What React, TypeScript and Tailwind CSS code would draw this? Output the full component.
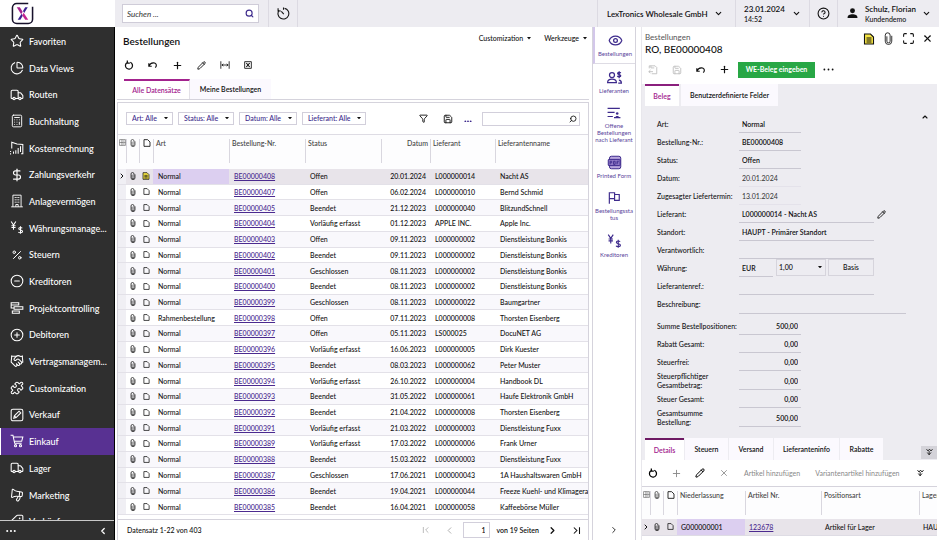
import type { ReactNode } from "react";
import {
  Calculator,
  ChartPie,
  ChevronDown,
  ChevronLeft,
  ChevronRight,
  ChevronUp,
  CircleHelp,
  CircleMinus,
  CirclePlus,
  DollarSign,
  Eye,
  Funnel,
  Handshake,
  Maximize,
  Megaphone,
  Pencil,
  Percent,
  Plus,
  Puzzle,
  Save,
  Search,
  ShoppingCart,
  Star,
  Tag,
  Truck,
  X,
} from "lucide-react";

interface IOrder {
  type: string,
  nr: string,
  status: string,
  date: string,
  supplier: string,
  name: string,
}

const o = (nr: string, status: string, date: string, supplier: string, name: string, type = "Normal"): IOrder =>
  ({ type, nr: `BE00000${nr}`, status, date, supplier, name });

const orders: IOrder[] = [
  o("408", "Offen", "20.01.2024", "L000000014", "Nacht AS"),
  o("407", "Offen", "06.02.2024", "L000000010", "Bernd Schmid"),
  o("405", "Beendet", "21.12.2023", "L000000040", "BlitzundSchnell"),
  o("404", "Vorläufig erfasst", "01.12.2023", "APPLE INC.", "Apple Inc."),
  o("403", "Offen", "09.11.2023", "L000000002", "Dienstleistung Bonkis"),
  o("402", "Beendet", "09.11.2023", "L000000002", "Dienstleistung Bonkis"),
  o("401", "Geschlossen", "08.11.2023", "L000000002", "Dienstleistung Bonkis"),
  o("400", "Beendet", "08.11.2023", "L000000002", "Dienstleistung Bonkis"),
  o("399", "Geschlossen", "08.11.2023", "L000000022", "Baumgartner"),
  o("398", "Offen", "07.11.2023", "L000000008", "Thorsten Eisenberg", "Rahmenbestellung"),
  o("397", "Offen", "05.11.2023", "LS000025", "DocuNET AG"),
  o("396", "Vorläufig erfasst", "16.06.2023", "L000000005", "Dirk Kuester"),
  o("395", "Beendet", "08.03.2023", "L000000062", "Peter Muster"),
  o("394", "Vorläufig erfasst", "26.10.2022", "L000000004", "Handbook DL"),
  o("393", "Beendet", "31.05.2022", "L000000061", "Haufe Elektronik GmbH"),
  o("392", "Beendet", "21.04.2022", "L000000008", "Thorsten Eisenberg"),
  o("391", "Vorläufig erfasst", "21.03.2022", "L000000003", "Dienstleistung Fuxx"),
  o("389", "Vorläufig erfasst", "17.03.2022", "L000000006", "Frank Urner"),
  o("388", "Beendet", "15.03.2022", "L000000003", "Dienstleistung Fuxx"),
  o("387", "Geschlossen", "17.06.2021", "L000000043", "1A Haushaltswaren GmbH"),
  o("386", "Beendet", "19.04.2021", "L000000044", "Freeze Kuehl- und Klimagera"),
  o("385", "Beendet", "16.04.2021", "L000000058", "Kaffeebörse Müller"),
];

function Svg({ children, className = "size-3", width = 2 }: { children: ReactNode, className?: string, width?: number }) {
  return <svg viewBox="0 0 24 24" fill="none" stroke="currentColor" strokeWidth={width} className={`shrink-0 ${className}`} aria-hidden="true">{children}</svg>;
}

const DocIcon = ({ className = "size-[8px]" }) => (
  <Svg className={className} width={2.6}><path d="M3 2h11l7 7v13H3z" /></Svg>
);

const NoteIcon = ({ className = "size-[9px]" }) => (
  <Svg className={className} width={2.2}><path d="M3 2h12l6 6v14H3z" fill="#f6e544" /><path d="M7 10h10M7 14h10M7 18h10" width={1.6} /></Svg>
);

const GridIcon = () => (
  <Svg className="size-[7px] text-[#555]"><path d="M2 2h20v20H2zM2 12h20M10 2v20M13 7h6M13 17h6" /></Svg>
);

const ClipIcon = ({ className = "size-[8px]", width = 2.2 }) => (
  <Svg className={className} width={width}><path d="M18 7v10a6 6 0 0 1-12 0V6a4.500 4.500 0 0 1 9 0v11a3 3 0 0 1-6 0V8" /></Svg>
);

const RefreshIcon = () => (
  <Svg className="size-[10px]" width={3}><path d="M15 5.500A8.500 8.500 0 1 1 7 6.500M8 1l0 6.500 6 0" /></Svg>
);

const UndoIcon = () => (
  <Svg className="size-[10px]" width={2.8}><path d="M2 8v7h7M2.500 14.500C6 5 20 4 20 13c0 2-1 4-3 5" /></Svg>
);

const YenDollar = ({ className = "size-4" }) => (
  <Svg className={className} width={1.8}>
    <path d="M2 1l4 6 4-6M6 7v8M2.500 8h7M2.500 11h7" />
    <path d="M21 12.500c-1-1.500-6-2-6 .8 0 3 6.500 1.500 6.500 4.700 0 3-6 2.800-7 .8M18 9v13" />
  </Svg>
);

const Caret = ({ className = "w-[5px]" }) => (
  <svg viewBox="0 0 10 6" className={`shrink-0 ${className}`} aria-hidden="true"><path d="M0 0h10L5 6z" fill="#111" /></svg>
);

const DoubleDown = () => (
  <Svg className="size-[9px]" width={2.2}><path d="M4 3l4 5 4-5M12 3l4 5 4-5M6 12l5 6 5-6M11 8v10" /></Svg>
);

const navIcon = "size-[14px] shrink-0";

const navItems: { label: string, icon: ReactNode }[] = [
  { label: "Favoriten", icon: <Star className={navIcon} strokeWidth={1.8} /> },
  { label: "Data Views", icon: <ChartPie className={navIcon} strokeWidth={1.8} /> },
  { label: "Routen", icon: <Truck className={navIcon} strokeWidth={1.8} /> },
  { label: "Buchhaltung", icon: <Calculator className={navIcon} strokeWidth={1.6} /> },
  {
    label: "Kostenrechnung",
    icon: <Svg className={navIcon} width={1.8}><path d="M3 13V2l9 3 10 1v16h-3M1 17v2M1 21v2M6 18v4M10 16v6M14 12v10M18 9v10" /></Svg>
  },
  { label: "Zahlungsverkehr", icon: <DollarSign className={navIcon} strokeWidth={2} /> },
  {
    label: "Anlagevermögen",
    icon: <Svg className={navIcon} width={1.6}><path d="M5 22V2h14v20M2 22h20M8 6h2M11 6h2M14 6h2M8 10h2M11 10h2M14 10h2M8 14h2M11 14h2M14 14h2M10 22v-4h4v4" /></Svg>
  },
  { label: "Währungsmanage...", icon: <YenDollar className={navIcon} /> },
  { label: "Steuern", icon: <Percent className="mx-px size-3 shrink-0" strokeWidth={2} /> },
  { label: "Kreditoren", icon: <CircleMinus className={navIcon} strokeWidth={1.8} /> },
  {
    label: "Projektcontrolling",
    icon: <Svg className={navIcon} width={1.8}><path d="M2 3h13v4H2zM7 10h15v4H7zM4 17h12v4H4zM2 5v7h5" /></Svg>
  },
  { label: "Debitoren", icon: <CirclePlus className={navIcon} strokeWidth={1.8} /> },
  { label: "Vertragsmanagem...", icon: <Handshake className={navIcon} strokeWidth={1.8} /> },
  { label: "Customization", icon: <Puzzle className={navIcon} strokeWidth={1.8} /> },
  {
    label: "Verkauf",
    icon: <Svg className={navIcon} width={1.8}><rect x="2" y="2" width="20" height="20" rx="3" /><path d="M6.500 17.500l1-4 8-8 3 3-8 8zM7.500 13.500l3 3" /></Svg>
  },
  {
    label: "Einkauf",
    icon: <Svg className={navIcon} width={1.8}><path d="M1 2h4l3 14h12M5.500 5H22l-2 7.500H7.500" /><circle cx="9.500" cy="20" r="1.800" /><circle cx="18" cy="20" r="1.800" /></Svg>
  },
  { label: "Lager", icon: <Truck className={navIcon} strokeWidth={1.8} /> },
  { label: "Marketing", icon: <Megaphone className={`${navIcon} -scale-x-100 rotate-6`} strokeWidth={1.8} /> },
  { label: "Verkäufer", icon: <Tag className={`${navIcon} -scale-x-100`} strokeWidth={1.8} /> },
];

function Sidebar() {
  return <aside className="flex w-[115px] shrink-0 flex-col border-r border-black bg-[#2f2f2f] text-white">
    <nav className="min-h-0 flex-1 overflow-hidden pt-px">
      <ul className="flex h-[103%] flex-col">
        {navItems.map((item) => {
          const active = item.label === "Einkauf";
          return (<li key={item.label} className="min-h-0 flex-1">
            <a href="#" className={`flex h-full items-center gap-[5px] border-l pl-[9px] text-[9px] font-medium whitespace-nowrap ${active ? "border-white bg-[#583192]" : "border-transparent"}`}>
              {item.icon}
              <span className="pt-px">{item.label}</span>
            </a>
          </li>)
        })}
      </ul>
    </nav>
    <div className="flex h-5 shrink-0 items-center justify-between border-t border-[#c8c8c8] px-1.5">
      <button aria-label="Mehr"><Svg className="size-[10px]" width={0}><g fill="currentColor"><circle cx="3" cy="12" r="2.500" /><circle cx="12" cy="12" r="2.500" /><circle cx="21" cy="12" r="2.500" /></g></Svg></button>
      <button aria-label="Menü einklappen"><ChevronLeft className="size-[10px]" strokeWidth={3} /></button>
    </div>
  </aside>;
}

function Header() {
  return <header className="flex h-[27px] shrink-0 bg-[#edecf1]">
    <div className="flex w-[115px] shrink-0 items-center bg-white pl-[11px]">
      <svg viewBox="0 0 24 24" className="size-[23px]" fill="none" role="img" aria-label="Logo">
        <path d="M18 1.500H6A4.500 4.500 0 0 0 1.500 6v12A4.500 4.500 0 0 0 6 22.500h12a4.500 4.500 0 0 0 4.500-4.500V5" stroke="#17112b" strokeWidth="1.600" />
        <path d="M6 5.500h3.200l3 4.800-1.600 2.500z" fill="#a8228f" />
        <path d="M17.500 5.500h-2.700l-2.300 3.800 1.300 2.200z" fill="#3a2191" />
        <path d="M11 12.200L7 18.500h2.800l2.500-4.200z" fill="#3a2191" />
        <path d="M13.200 11.200l-1.500 2.500 3.200 4.800H18z" fill="#c3248e" />
      </svg>
    </div>
    <div className="flex items-center border-r border-[#dcdae2] pr-[9px] pl-[7px]">
      <label className="flex h-[19px] w-[137px] items-center border border-[#cfccd8] bg-white px-1">
        <input type="search" aria-label="Suchen" placeholder="Suchen ..." className="min-w-0 flex-1 text-[8px] italic outline-none placeholder:text-[#333]" />
        <Search className="size-[9px] text-[#3d2a8c]" strokeWidth={3} />
      </label>
    </div>
    <button aria-label="Verlauf" className="flex w-[29px] items-center justify-center border-r border-[#dcdae2]">
      <Svg className="size-[13px]"><path d="M14 2.500A10 10 0 1 1 4 6M2 2.500v5h5M8 8l4.500 5M12 1v4" /></Svg>
    </button>
    <div className="flex-1" />
    <button className="flex w-[138px] items-center gap-[6px] border-l border-[#dcdae2] pl-[9px] text-[8px] font-semibold whitespace-nowrap">
      LexTronics Wholesale GmbH
      <ChevronDown className="size-[9px]" strokeWidth={3} />
    </button>
    <button className="flex w-[74px] items-center gap-[7px] border-l border-[#dcdae2] pl-2 text-left whitespace-nowrap">
      <span className="flex flex-col font-semibold">
        <span className="text-[8px] leading-[10px]">23.01.2024</span>
        <span className="text-[7px] leading-[10px] font-medium">14:52</span>
      </span>
      <ChevronDown className="size-[9px]" strokeWidth={3} />
    </button>
    <button aria-label="Hilfe" className="flex w-[29px] items-center justify-center border-x border-[#dcdae2]">
      <CircleHelp className="size-[13px]" />
    </button>
    <button className="flex w-[101px] items-center pr-2 pl-[9px] text-left whitespace-nowrap">
      <svg viewBox="0 0 20 20" className="mr-[7px] size-[11px] shrink-0"><circle cx="10" cy="5" r="4.500" fill="#111" /><path d="M1 18c0-5 4-6.500 9-6.500s9 1.500 9 6.500z" fill="#111" /></svg>
      <span className="flex flex-1 flex-col font-semibold">
        <span className="text-[8px] leading-[10px]">Schulz, Florian</span>
        <span className="text-[7px] leading-[10px] font-medium">Kundendemo</span>
      </span>
      <ChevronDown className="size-[9px]" strokeWidth={3} />
    </button>
  </header>;
}

function Chip({ text, width }: { text: string, width: string }) {
  return <div className={`relative h-[13px] ${width}`}>
    <select aria-label={text} className="block h-full w-full appearance-none border border-[#d2cfdb] bg-white pl-[5px] text-[7px] font-medium text-[#3d2a8c]">
      <option>{text}</option>
    </select>
    <Caret className="pointer-events-none absolute top-[5px] right-[5px] w-1" />
  </div>;
}

function HeadCell({ children, right = false }: { children?: ReactNode, right?: boolean }) {
  return <th className="p-0 align-top font-medium">
    <div className={`mt-[4px] h-[24px] overflow-hidden border-l border-[#d9d7df] leading-[8px] whitespace-nowrap text-[#444] ${right ? "pr-0.5 text-right" : "pl-0.5 text-left"}`}>{children}</div>
  </th>;
}

function IconHead({ children, border = true }: { children: ReactNode, border?: boolean }) {
  return <th className="p-0 align-top">
    <div className={`mt-[4px] flex h-[24px] items-start justify-center ${border ? "border-l border-[#d9d7df]" : ""}`}>{children}</div>
  </th>;
}

function OrderTable() {
  return <table className="h-full w-full table-fixed border-collapse text-[7px] font-medium">
    <colgroup>
      <col className="w-[8px]" />
      <col className="w-[13px]" />
      <col className="w-[14px]" />
      <col className="w-[76px]" />
      <col className="w-[76px]" />
      <col className="w-[76px]" />
      <col className="w-[49px]" />
      <col className="w-[65px]" />
      <col />
    </colgroup>
    <thead>
      <tr className="h-[34px] bg-[#fdfdfe]">
        <IconHead border={false}><GridIcon /></IconHead>
        <IconHead><ClipIcon width={1.8} /></IconHead>
        <IconHead><DocIcon /></IconHead>
        <HeadCell>Art</HeadCell>
        <HeadCell>Bestellung-Nr.</HeadCell>
        <HeadCell>Status</HeadCell>
        <HeadCell right>Datum</HeadCell>
        <HeadCell>Lieferant</HeadCell>
        <HeadCell>Lieferantenname</HeadCell>
      </tr>
    </thead>
    <tbody>
      {orders.map((order, i) => {
        const selected = i === 0;
        return (<tr key={order.nr} className={`border-b border-[#e3e1e8] leading-3 whitespace-nowrap ${selected ? "bg-[#e8e4ea]" : i % 2 ? "bg-white" : "bg-[#f9f8fc]"}`}>
          <td className="bg-[#f0eff4] p-0">{selected && <ChevronRight className="size-[8px]" strokeWidth={3} />}</td>
          <td className="p-0"><ClipIcon className="mx-auto size-[8px]" /></td>
          <td className="p-0">{selected ? <NoteIcon className="mx-auto size-[8px]" /> : <DocIcon className="mx-auto size-[7px]" />}</td>
          <td className={`p-0 pl-[5px] ${selected ? "bg-[#dccff0]" : ""}`}>{order.type}</td>
          <td className="p-0 pl-[5px]"><a href="#" className="text-[#4b2a8f] underline">{order.nr}</a></td>
          <td className="p-0 pl-[5px]">{order.status}</td>
          <td className="p-0 pr-1 text-right">{order.date}</td>
          <td className="p-0 pl-[5px]">{order.supplier}</td>
          <td className="overflow-hidden p-0 pl-[5px]">{order.name}</td>
        </tr>)
      })}
    </tbody>
  </table>;
}

function OrderList() {
  return <section className="flex min-w-0 flex-1 flex-col pr-[3px] pl-[2px]">
    <div className="flex h-[27px] shrink-0 items-center pl-[6px]">
      <h1 className="flex-1 pt-0.5 text-[10px] font-semibold">Bestellungen</h1>
      <div className="flex gap-[13px] pr-[2px] pb-1 text-[7px] font-medium">
        <button className="flex items-center gap-1">Customization<Caret className="w-1" /></button>
        <button className="flex items-center gap-1">Werkzeuge<Caret className="w-1" /></button>
      </div>
    </div>
    <div className="flex h-[25px] shrink-0 items-center gap-[14px] pb-[3px] pl-[7px]">
      <button aria-label="Aktualisieren"><RefreshIcon /></button>
      <button aria-label="Rückgängig"><UndoIcon /></button>
      <button aria-label="Neu"><Plus className="size-[11px]" strokeWidth={2.6} /></button>
      <button aria-label="Bearbeiten"><Pencil className="size-[9px]" strokeWidth={2.4} /></button>
      <button aria-label="Spaltenbreite"><Svg className="size-[10px]"><path d="M2 3v18M22 3v18M4 12h16M8 9l-3 3 3 3M16 9l3 3-3 3" /></Svg></button>
      <button aria-label="Excel-Export"><Svg className="size-[8px]" width={2.6}><path d="M2 2h20v20H2z" /><path d="M7 6l10 12M17 6L7 18" strokeWidth="3.400" /></Svg></button>
    </div>
    <div className="flex h-[21px] shrink-0 border-b border-[#d5d3dc] pl-[7px] text-[7px] font-semibold">
      <button className="w-[66px] border-t-2 border-r border-t-[#a3238e] border-r-[#e3e1e8] text-[#a3238e]">Alle Datensätze</button>
      <button className="w-[81px] bg-[#fbf9fe]">Meine Bestellungen</button>
    </div>
    <div className="mt-[2px] flex min-h-0 flex-1 flex-col border-x border-t border-[#d5d3dc]">
      <div className="flex h-8 shrink-0 items-center border-b border-[#dedce4] pr-2 pl-2">
        <div className="flex flex-1 gap-[5px]">
          <Chip text="Art: Alle" width="w-[47px]" />
          <Chip text="Status: Alle" width="w-[56px]" />
          <Chip text="Datum: Alle" width="w-[58px]" />
          <Chip text="Lieferant: Alle" width="w-[64px]" />
        </div>
        <div className="flex items-center">
          <button aria-label="Filter"><Funnel className="size-[9px]" strokeWidth={2.4} /></button>
          <button aria-label="Filter speichern" className="ml-[15px]"><Save className="size-[10px]" strokeWidth={2.2} /></button>
          <button aria-label="Mehr" className="mt-[5px] mr-[10px] ml-[11px] text-[#3d2a8c]">
            <svg viewBox="0 0 9 3" className="w-2" fill="currentColor"><circle cx="1.500" cy="1.500" r="1" /><circle cx="4.500" cy="1.500" r="1" /><circle cx="7.500" cy="1.500" r="1" /></svg>
          </button>
          <label className="flex h-[14px] w-[98px] items-center border border-[#d2cfdb] px-0.5">
            <input type="search" aria-label="Liste durchsuchen" className="min-w-0 flex-1 text-[7px] outline-none" />
            <Search className="size-[8px] -scale-x-100" strokeWidth={2.6} />
          </label>
        </div>
      </div>
      <div className="min-h-0 flex-1 overflow-hidden"><OrderTable /></div>
      <div className="mt-[4px] flex h-[21px] shrink-0 items-center border-t border-[#d5d3dc] pr-[7px] pl-[9px] text-[7px] font-semibold">
        <span className="flex-1 font-medium">Datensatz 1-22 von 403</span>
        <button aria-label="Erste Seite" className="text-[#aaa]"><Svg className="size-[8px]" width={2.4}><path d="M4 3v18M19 4l-8 8 8 8" /></Svg></button>
        <button aria-label="Vorherige Seite" className="ml-[14px] text-[#aaa]"><ChevronLeft className="size-[11px]" /></button>
        <input aria-label="Seite" defaultValue="1" className="mr-[6px] ml-2 h-4 w-[27px] border border-[#d2cfdb] pr-1 text-right" />
        <span>von 19 Seiten</span>
        <button aria-label="Nächste Seite" className="ml-2"><ChevronRight className="size-[11px]" strokeWidth={2.8} /></button>
        <button aria-label="Letzte Seite" className="ml-[14px]"><Svg className="size-[9px]" width={2.8}><path d="M20 3v18M5 4l8 8-8 8" /></Svg></button>
      </div>
    </div>
  </section>;
}

const railItems: { label: string, height: string, icon: ReactNode }[] = [
  { label: "Bestellungen", height: "h-[37px]", icon: <Eye className="size-[15px]" /> },
  {
    label: "Lieferanten",
    height: "h-[36px]",
    icon: <Svg className="size-[15px]"><circle cx="8" cy="8" r="4" /><path d="M1 20c0-7 14-7 14 0zM22 5c-1-2-5-1.500-5 .5 0 2.500 5 1 5 3.500 0 2-4 2-5.500.5M19.500 2v11M18 21h5c0-3-1-5-4-5" /></Svg>
  },
  {
    label: "Offene Bestellungen nach Lieferant",
    height: "h-[49px]",
    icon: <Svg className="size-[14px]"><path d="M1 4h21M1 11h12M1 18h9M12 20h11" /><path d="M14 20c0-4 7-4 7 0z" fill="currentColor" stroke="none" /><circle cx="17.500" cy="13" r="2.200" fill="currentColor" stroke="none" /></Svg>
  },
  {
    label: "Printed Form",
    height: "h-[36px]",
    icon: <Svg className="size-[15px]" width={1.6}><rect x="4" y="2" width="18" height="20" rx="3" fill="#b9a6dd" /><rect x="2" y="7" width="19" height="10" rx="1" fill="#8f78c6" /><path d="M5 15v-5h2.500v2.500H5M10.500 10v5h2.500v-5zM16 15v-5h3M16 12.500h2" strokeWidth="1.400" /></Svg>
  },
  {
    label: "Bestellungssta tus",
    height: "h-[43px]",
    icon: <Svg className="size-[14px]"><path d="M4 22V3h9v10H4M13 6h8v10h-8v-3" /></Svg>
  },
  { label: "Kreditoren", height: "h-[36px]", icon: <YenDollar className="size-[15px]" /> },
];

function Rail() {
  return <nav className="flex w-[44px] shrink-0 flex-col border-x border-[#d5d3dc] text-[#3d2a8c]">
    {railItems.map((item, i) => (
      <a key={item.label} href="#" className={`flex shrink-0 flex-col items-center gap-[2px] pt-[6px] text-center text-[6px] leading-[7px] ${item.height} ${i === 0 ? "border-b border-l-2 border-b-[#dedce4] border-l-[#d3c7ea]" : ""}`}>
        {item.icon}
        <span className="w-[40px] text-[#5b459c]">{item.label}</span>
      </a>
    ))}
    <button aria-label="Ausklappen" className="mt-auto mb-[5px] self-center text-[#333]"><ChevronRight className="size-[10px]" strokeWidth={2.4} /></button>
  </nav>;
}

interface IField {
  id: string,
  label: string,
  value?: string,
  width?: string,
  height?: string,
  muted?: boolean,
  right?: boolean,
  extra?: ReactNode,
}

function Field({ id, label, value = "", width = "w-[62px]", height = "h-[18px]", muted, right, extra }: IField) {
  return <div className={`flex ${height}`}>
    <label htmlFor={id} className="flex w-[82px] shrink-0 items-center leading-[9px]"><span className={height === "h-[19px]" && right ? "w-[60px]" : "whitespace-nowrap"}>{label}</span></label>
    <input id={id} defaultValue={value} readOnly={muted} className={`border-b bg-transparent px-[3px] pt-0.5 ${width} ${right ? "text-right" : ""} ${muted ? "border-[#e4e2ea] font-normal text-[#333]" : "border-[#c9c7d1] font-semibold"}`} />
    {extra}
  </div>;
}

function CurrencyExtra() {
  return <>
    <div className="relative ml-[3px] w-[50px] pb-px">
      <select aria-label="Wechselkurs" className="h-full w-full appearance-none border border-[#d6d4dc] pl-0.5">
        <option>1,00</option>
      </select>
      <Caret className="pointer-events-none absolute top-[7px] right-1 w-1" />
    </div>
    <button className="mb-px ml-[2px] w-[46px] border border-[#d6d4dc]">Basis</button>
  </>;
}

function OrderForm() {
  return <form className="relative pt-[9px] pl-[15px] text-[7px] font-medium">
    <button type="button" aria-label="Einklappen" className="absolute top-[7px] right-[8px]"><ChevronUp className="size-2" strokeWidth={3.4} /></button>
    <Field id="art" label="Art:" value="Normal" />
    <Field id="nr" label="Bestellung-Nr.:" value="BE00000408" />
    <Field id="status" label="Status:" value="Offen" />
    <Field id="datum" label="Datum:" value="20.01.2024" muted />
    <Field id="termin" label="Zugesagter Liefertermin:" value="13.01.2024" muted />
    <Field id="lieferant" label="Lieferant:" value="L000000014 - Nacht AS" width="w-[135px]"
      extra={<button type="button" aria-label="Lieferant bearbeiten" className="ml-[3px]"><Pencil className="size-[9px]" strokeWidth={2.4} /></button>} />
    <Field id="standort" label="Standort:" value="HAUPT - Primärer Standort" width="w-[135px]" />
    <Field id="verantwortlich" label="Verantwortlich:" width="w-[135px]" />
    <Field id="waehrung" label="Währung:" value="EUR" width="w-[34px]" extra={<CurrencyExtra />} />
    <Field id="ref" label="Lieferantenref.:" width="w-[135px]" />
    <Field id="beschreibung" label="Beschreibung:" width="w-[167px]" height="h-[19px]" />
    <div className="pt-[3px]">
      <Field id="summe" label="Summe Bestellpositionen:" value="500,00" right />
      <Field id="rabatt" label="Rabatt Gesamt:" value="0,00" right />
      <Field id="steuerfrei" label="Steuerfrei:" value="0,00" right />
      <Field id="pflichtig" label="Steuerpflichtiger Gesamtbetrag:" value="0,00" height="h-[19px]" right />
      <Field id="steuer" label="Steuer Gesamt:" value="0,00" right />
      <Field id="gesamt" label="Gesamtsumme Bestellung:" value="500,00" height="h-[19px]" right />
    </div>
  </form>;
}

function Detail() {
  return <section className="ml-[5px] flex w-[298px] shrink-0 flex-col overflow-hidden border-l border-[#e8e7ec] pr-[2px]">
    <div className="flex h-[57px] shrink-0 flex-col pl-[3px]">
      <div className="flex items-start pt-[5px]">
        <div className="flex-1">
          <p className="text-[8px] leading-[11px] text-[#555]">Bestellungen</p>
          <h2 className="text-[10px] leading-[13px] font-medium">RO, BE00000408</h2>
        </div>
        <div className="flex items-center gap-[7px] pr-1">
          <button aria-label="Notizen"><NoteIcon className="size-[12px]" /></button>
          <button aria-label="Dateien"><ClipIcon className="size-[13px]" width={1.6} /></button>
          <button aria-label="Vollbild"><Maximize className="size-[13px]" /></button>
          <button aria-label="Schließen"><X className="size-[11px]" strokeWidth={2.4} /></button>
        </div>
      </div>
      <div className="flex h-[27px] items-center pl-[3px]">
        <button aria-label="Speichern und schließen" className="text-[#bbb]"><Svg className="size-[10px]"><path d="M3 8V2h14l4 4v15H9M7 2v5h8M2 16h10M6 12l-4 4 4 4" /></Svg></button>
        <button aria-label="Speichern" className="ml-[14px] text-[#bbb]"><Save className="size-[10px]" /></button>
        <button aria-label="Rückgängig" className="ml-[14px]"><UndoIcon /></button>
        <button aria-label="Neu" className="ml-[13px]"><Plus className="size-[11px]" strokeWidth={2.6} /></button>
        <button className="ml-2 h-4 w-[77px] bg-[#28a745] text-[7px] font-bold text-white">WE-Beleg eingeben</button>
        <button aria-label="Mehr" className="ml-2"><Svg className="size-[11px]" width={0}><g fill="currentColor"><circle cx="3" cy="12" r="2" /><circle cx="12" cy="12" r="2" /><circle cx="21" cy="12" r="2" /></g></Svg></button>
      </div>
    </div>
    <div className="flex shrink-0 flex-col bg-[#edecf1]">
      <div className="flex h-[22px] gap-0.5 pl-[3px] text-[7px] font-semibold">
        <button className="w-[34px] border-t-2 border-[#8a1f7d] bg-white text-[#a3238e]">Beleg</button>
        <button className="w-[97px] bg-[#fbf9fe]">Benutzerdefinierte Felder</button>
      </div>
      <OrderForm />
      <div className="mt-[11px] flex h-[22px] gap-px pl-[3px] text-[7px] font-semibold">
        <button className="w-[39px] border-t-2 border-[#6e1a63] bg-white text-[#a3238e]">Details</button>
        <button className="w-[43px] bg-[#fbf9fe]">Steuern</button>
        <button className="w-[44px] bg-[#fbf9fe]">Versand</button>
        <button className="w-[65px] bg-[#fbf9fe]">Lieferanteninfo</button>
        <button className="w-[43px] bg-[#fbf9fe]">Rabatte</button>
        <button aria-label="Mehr" className="mt-auto mb-px ml-auto flex h-[13px] w-4 items-center justify-center bg-[#d4d3d9]"><DoubleDown /></button>
      </div>
    </div>
    <div className="flex h-[26px] shrink-0 items-center pl-[6px] text-[7px] whitespace-nowrap text-[#888]">
      <button aria-label="Aktualisieren" className="text-black"><RefreshIcon /></button>
      <button aria-label="Hinzufügen" className="ml-[13px]"><Plus className="size-[11px]" /></button>
      <button aria-label="Bearbeiten" className="ml-[13px] text-black"><Pencil className="size-[10px]" strokeWidth={2.4} /></button>
      <button aria-label="Löschen" className="ml-[14px]"><X className="size-[10px]" /></button>
      <button className="ml-[15px]">Artikel hinzufügen</button>
      <button className="ml-[15px] flex-1 text-left">Variantenartikel hinzufügen</button>
      <button aria-label="Mehr" className="mr-3 text-black"><DoubleDown /></button>
    </div>
    <table className="w-full table-fixed border-collapse border-t border-[#d5d3dc] text-[7px] font-medium">
      <colgroup>
        <col className="w-[8px]" />
        <col className="w-[13px]" />
        <col className="w-[14px]" />
        <col className="w-[68px]" />
        <col className="w-[76px]" />
        <col className="w-[98px]" />
        <col />
      </colgroup>
      <thead>
        <tr className="h-[32px] bg-[#fdfdfe]">
          <IconHead border={false}><GridIcon /></IconHead>
          <IconHead><ClipIcon width={1.8} /></IconHead>
          <IconHead><DocIcon /></IconHead>
          <HeadCell>Niederlassung</HeadCell>
          <HeadCell>Artikel Nr.</HeadCell>
          <HeadCell>Positionsart</HeadCell>
          <HeadCell>Lager</HeadCell>
        </tr>
      </thead>
      <tbody>
        <tr className="h-[17px] border-b border-[#dedce4] bg-[#e8e4ea] leading-3 whitespace-nowrap">
          <td className="p-0"><ChevronRight className="size-[8px]" strokeWidth={3} /></td>
          <td className="p-0"><ClipIcon className="mx-auto size-[8px]" /></td>
          <td className="p-0"><DocIcon className="mx-auto size-[7px]" /></td>
          <td className="bg-[#dccff0] p-0 pl-1">G000000001</td>
          <td className="p-0 pl-1"><a href="#" className="text-[#4b2a8f] underline">123678</a></td>
          <td className="p-0 pl-1">Artikel für Lager</td>
          <td className="overflow-hidden p-0 pl-1">HAUPT</td>
        </tr>
      </tbody>
    </table>
  </section>;
}

function App() {
  return <div className="flex h-screen flex-col overflow-hidden bg-white font-[Lato,sans-serif] text-[#111]">
    <Header />
    <div className="flex min-h-0 flex-1">
      <Sidebar />
      <OrderList />
      <Rail />
      <Detail />
    </div>
  </div>;
}

export default App;
